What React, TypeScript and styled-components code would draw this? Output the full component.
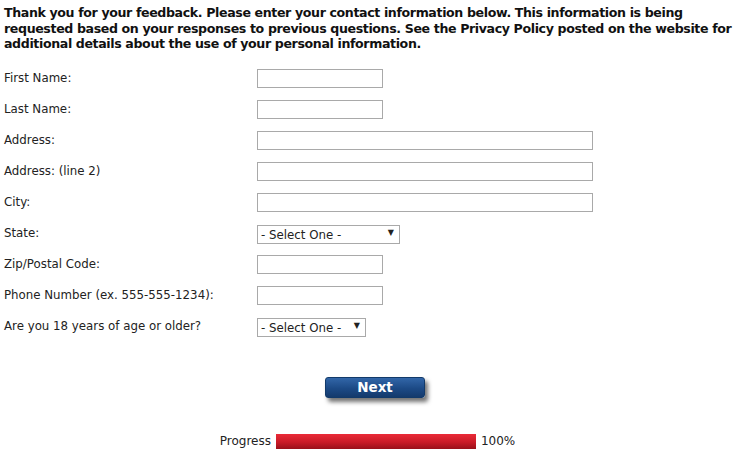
import styled, { createGlobalStyle } from "styled-components";

const GlobalStyle = createGlobalStyle`
  body {
    margin: 0;
    background: #ffffff;
    font-family: "DejaVu Sans", Verdana, sans-serif;
    color: #000000;
  }
`;

const Page = styled.div`
  width: 735px;
  padding: 5px 0 0 4px;
`;

const Intro = styled.p`
  margin: 0;
  font-size: 12.6px;
  font-weight: bold;
  line-height: 15.5px;
  letter-spacing: -0.38px;
  color: #111111;
`;

const Form = styled.div`
  display: grid;
  grid-template-columns: 253px 1fr;
  grid-auto-rows: 31px;
  margin-top: 17px;
`;

const Label = styled.label`
  font-size: 11.8px;
  color: #222222;
  display: flex;
  align-items: flex-start;
  padding-top: 2px;
`;

const Field = styled.div`
  display: flex;
  align-items: flex-start;
`;

const TextInput = styled.input<{ $wide?: boolean }>`
  box-sizing: border-box;
  width: ${(p) => (p.$wide ? "336px" : "126px")};
  height: 19px;
  border: 1px solid #a9a9a9;
  padding: 1px 3px;
  margin: 0;
  font-family: inherit;
  font-size: 12px;
  background: #ffffff;
`;

const SelectWrap = styled.div<{ $w: number }>`
  position: relative;
  width: ${(p) => p.$w}px;
  height: 19px;
`;

const Select = styled.select`
  appearance: none;
  box-sizing: border-box;
  width: 100%;
  height: 19px;
  border: 1px solid #a9a9a9;
  border-radius: 0;
  padding: 0 0 0 3px;
  margin: 0;
  background: #ffffff;
  font-family: inherit;
  font-size: 11.8px;
  color: #222222;
`;

const Arrow = styled.span`
  position: absolute;
  right: 6px;
  top: 4px;
  font-size: 8px;
  line-height: 10px;
  color: #222222;
  pointer-events: none;
`;

const ButtonRow = styled.div`
  display: flex;
  justify-content: center;
  padding-left: 7px;
  margin-top: 29px;
`;

const NextButton = styled.button`
  width: 100px;
  height: 21px;
  border: 1px solid #123a6a;
  border-radius: 3px;
  background: linear-gradient(#3266a8, #1c4a86 55%, #143a6c);
  box-shadow: 3px 4px 4px rgba(0, 0, 0, 0.55);
  color: #ffffff;
  font-family: inherit;
  font-size: 13.5px;
  font-weight: bold;
  padding: 0;
  line-height: 17px;
`;

const ProgressRow = styled.div`
  display: flex;
  align-items: center;
  justify-content: center;
  gap: 5px;
  margin-top: 36px;
  padding-right: 8px;
  font-size: 12px;
  color: #222222;
`;

const Bar = styled.div`
  width: 200px;
  height: 15px;
  background: linear-gradient(#ea2a38, #c91b27 55%, #99111a);
`;

const fields: { label: string; kind: "text" | "wide" | "state" | "age" }[] = [
  { label: "First Name:", kind: "text" },
  { label: "Last Name:", kind: "text" },
  { label: "Address:", kind: "wide" },
  { label: "Address: (line 2)", kind: "wide" },
  { label: "City:", kind: "wide" },
  { label: "State:", kind: "state" },
  { label: "Zip/Postal Code:", kind: "text" },
  { label: "Phone Number (ex. 555-555-1234):", kind: "text" },
  { label: "Are you 18 years of age or older?", kind: "age" },
];

export default function App() {
  return (
    <>
      <GlobalStyle />
      <Page>
        <Intro>
          Thank you for your feedback. Please enter your contact information
          below. This information is being requested based on your responses to
          previous questions. See the Privacy Policy posted on the website for
          additional details about the use of your personal information.
        </Intro>
        <Form>
          {fields.map((f) => (
            <>
              <Label key={f.label + "l"}>{f.label}</Label>
              <Field key={f.label + "f"}>
                {f.kind === "text" && <TextInput />}
                {f.kind === "wide" && <TextInput $wide />}
                {(f.kind === "state" || f.kind === "age") && (
                  <SelectWrap $w={f.kind === "state" ? 143 : 109}>
                    <Select>
                      <option>- Select One -</option>
                    </Select>
                    <Arrow>▼</Arrow>
                  </SelectWrap>
                )}
              </Field>
            </>
          ))}
        </Form>
        <ButtonRow>
          <NextButton>Next</NextButton>
        </ButtonRow>
        <ProgressRow>
          <span>Progress</span>
          <Bar />
          <span>100%</span>
        </ProgressRow>
      </Page>
    </>
  );
}
